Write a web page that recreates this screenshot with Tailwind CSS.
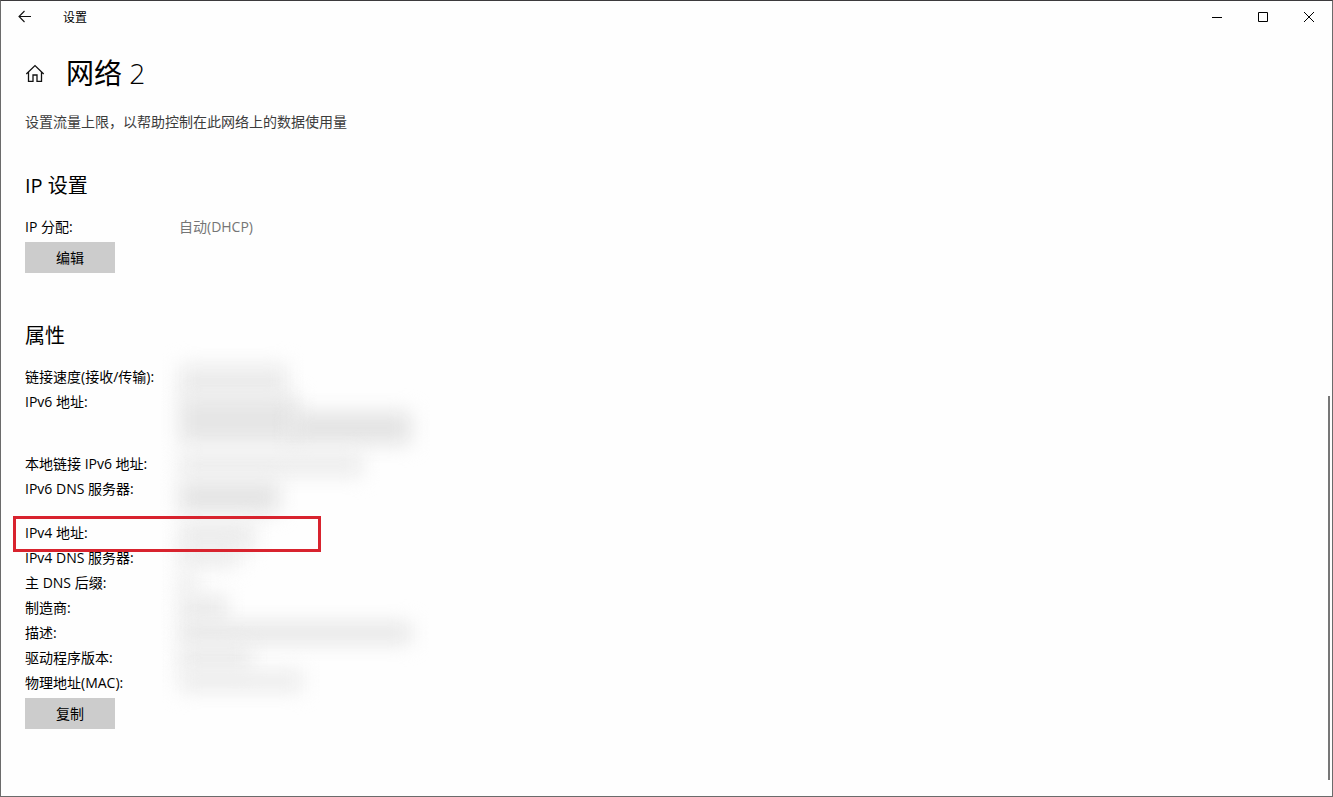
<!DOCTYPE html>
<html lang="zh-CN">
<head>
<meta charset="utf-8">
<meta name="viewport" content="width=device-width, initial-scale=1">
<title>设置</title>
<script src="https://cdn.jsdelivr.net/npm/@tailwindcss/browser@4"></script>
</head>
<body class="relative flex min-h-screen flex-col border border-[#6b6b6b] border-t-[#3c3a3d] bg-[#fefefe] font-['Open_Sans','Noto_Sans_CJK_SC',sans-serif] text-sm text-black">
  <header class="flex h-8 items-center">
    <button type="button" aria-label="返回" class="flex h-8 w-12 items-center justify-center">
      <svg class="size-4" viewBox="0 0 16 16" fill="none" stroke="#111" stroke-width="1.1"><path d="M2 7.5H14M7.5 2L2 7.5L7.5 13"/></svg>
    </button>
    <span class="ml-3.5 pt-0.5 text-xs">设置</span>
    <div class="ml-auto flex">
      <button type="button" aria-label="最小化" class="flex h-8 w-[46px] items-center justify-center">
        <svg class="size-3" viewBox="0 0 12 12" fill="none" stroke="#000"><path d="M1 6.5H11"/></svg>
      </button>
      <button type="button" aria-label="最大化" class="flex h-8 w-[46px] items-center justify-center">
        <svg class="size-3" viewBox="0 0 12 12" fill="none" stroke="#000"><path d="M1.5 1.5H10.5V10.5H1.5Z"/></svg>
      </button>
      <button type="button" aria-label="关闭" class="flex h-8 w-[46px] items-center justify-center">
        <svg class="size-3" viewBox="0 0 12 12" fill="none" stroke="#000"><path d="M1 1L11 11M11 1L1 11"/></svg>
      </button>
    </div>
  </header>

  <main class="flex-1 px-6 pt-5 pb-16">
    <div class="flex h-10 items-center">
      <button type="button" aria-label="主页">
        <svg class="size-5" viewBox="0 0 20 20" fill="none" stroke="#111" stroke-width="1.3"><path d="M1.3 11L10 2.6L18.7 11M3.5 9V18.4H8V12H12V18.4H16.5V9"/></svg>
      </button>
      <h1 class="ml-[21px] text-[28px] leading-10">网络 <span class="font-light">2</span></h1>
    </div>
    <p class="mt-[19px] leading-5 text-[#3c3c3c]">设置流量上限，以帮助控制在此网络上的数据使用量</p>

    <section class="mt-10">
      <h2 class="text-xl leading-7">IP 设置</h2>
      <dl class="mt-[15px] h-[25px] leading-[23px]">
        <div class="flex"><dt class="w-[154px]">IP 分配:</dt><dd class="text-[#757575]">自动(DHCP)</dd></div>
      </dl>
      <button type="button" class="mt-0.5 h-[31px] w-[90px] bg-[#cccccc]">编辑</button>
    </section>

    <section class="mt-[49px]">
      <h2 class="text-xl leading-7">属性</h2>
      <dl class="mt-[15px] leading-[23px]">
        <div class="flex h-[25px]"><dt class="w-[154px]">链接速度(接收/传输):</dt><dd><div class="h-8 w-27 bg-[#ebebeb] blur-[10px]"></div></dd></div>
        <div class="flex h-[62px]"><dt class="w-[154px]">IPv6 地址:</dt><dd class="relative flex items-end pb-2"><div class="h-12 w-30 bg-[#e6e6e6] blur-[10px]"></div><div class="-ml-2 h-8 w-30 bg-[#e3e3e3] blur-[10px]"></div></dd></div>
        <div class="flex h-[25px]"><dt class="w-[154px]">本地链接 IPv6 地址:</dt><dd><div class="h-6 w-46 bg-[#ececec] blur-[10px]"></div></dd></div>
        <div class="flex h-[44px]"><dt class="w-[154px]">IPv6 DNS 服务器:</dt><dd class="py-1"><div class="h-8 w-25 bg-[#e4e4e4] blur-[10px]"></div></dd></div>
        <div class="relative flex h-[25px]"><dt class="w-[154px]">IPv4 地址:</dt><dd><div class="h-7 w-19 bg-[#ececec] blur-[10px]"></div></dd>
          <div class="absolute -top-[5px] -left-3 z-10 h-9 w-77 border-3 border-[#d8232e]"></div>
        </div>
        <div class="flex h-[25px]"><dt class="w-[154px]">IPv4 DNS 服务器:</dt><dd><div class="h-5 w-15 bg-[#ebebeb] blur-[10px]"></div></dd></div>
        <div class="flex h-[25px]"><dt class="w-[154px]">主 DNS 后缀:</dt><dd><div class="h-6 w-4 bg-[#ebebeb] blur-[10px]"></div></dd></div>
        <div class="flex h-[25px]"><dt class="w-[154px]">制造商:</dt><dd><div class="h-6 w-12 bg-[#e9e9e9] blur-[10px]"></div></dd></div>
        <div class="flex h-[25px]"><dt class="w-[154px]">描述:</dt><dd class="py-0.5"><div class="h-5 w-58 bg-[#e5e5e5] blur-[10px]"></div></dd></div>
        <div class="flex h-[25px]"><dt class="w-[154px]">驱动程序版本:</dt><dd><div class="h-6 w-18 bg-[#eaeaea] blur-[10px]"></div></dd></div>
        <div class="flex h-[25px]"><dt class="w-[154px]">物理地址(MAC):</dt><dd><div class="h-5 w-31 bg-[#ebebeb] blur-[10px]"></div></dd></div>
      </dl>
      <button type="button" class="mt-0.5 h-[31px] w-[90px] bg-[#cccccc]">复制</button>
    </section>
  </main>

  <!-- scroll indicator -->
  <div class="absolute top-[395px] right-0.5 bottom-4 w-0.5 bg-[#777777]"></div>
</body>
</html>
